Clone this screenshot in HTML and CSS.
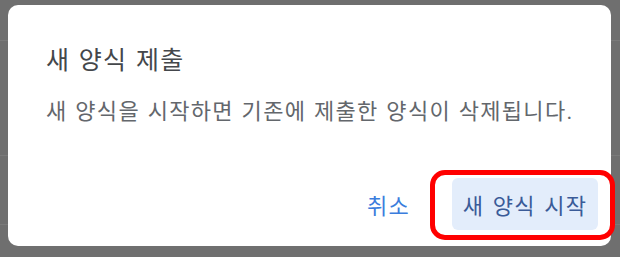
FILE: index.html
```html
<!DOCTYPE html>
<html lang="ko">
<head>
    <meta charset="UTF-8">
    <title>새 양식 제출</title>
    <link rel="stylesheet" href="styles.css">
</head>
<body>
    <div class="page">
        <div class="page__row page__row--first"></div>
        <div class="page__row page__row--second"></div>
        <div class="page__row page__row--third"></div>
    </div>

    <div class="dialog" role="dialog">
        <h2 class="dialog__title">새 양식 제출</h2>
        <p class="dialog__content">새 양식을 시작하면 기존에 제출한 양식이 삭제됩니다.</p>
        <div class="dialog__actions">
            <button class="dialog__btn dialog__btn--text">취소</button>
            <button class="dialog__btn dialog__btn--tonal">새 양식 시작</button>
        </div>
    </div>

    <div class="highlight"></div>
</body>
</html>
```

FILE: styles.css
```css
body{
    margin: 0;
    width: 620px;
    height: 257px;
    overflow: hidden;
    background: #6f6f6f;
    font-family: Roboto, "Noto Sans CJK KR", sans-serif;
}
.page{
    height: 257px;
}
.page__row{
    border-bottom: 1px solid #7a7a7a;
}
.page__row--first{
    height: 40px;
}
.page__row--second{
    height: 114px;
}
.page__row--third{
    height: 68px;
}
.dialog{
    position: absolute;
    left: 8px;
    top: 5px;
    width: 603px;
    height: 241px;
    box-sizing: border-box;
    padding: 38px 13px 16px 38px;
    background: #fff;
    border-radius: 10px;
    display: flex;
    flex-direction: column;
}
.dialog__title{
    margin: 0;
    font-size: 25px;
    font-weight: 400;
    line-height: 36px;
    letter-spacing: 1.3px;
    word-spacing: 1px;
    color: #44474b;
}
.dialog__content{
    margin: 18px 0 0;
    font-size: 22px;
    line-height: 30px;
    letter-spacing: 1.3px;
    word-spacing: 1px;
    color: #63676c;
}
.dialog__actions{
    margin-top: auto;
    display: flex;
    justify-content: flex-end;
    align-items: center;
    gap: 42px;
}
.dialog__btn{
    border: none;
    background: none;
    font-family: inherit;
    font-size: 22px;
    height: 52px;
    padding: 0;
    border-radius: 6px;
    letter-spacing: 1.2px;
    word-spacing: 2px;
}
.dialog__btn--text{
    color: #3b7ddd;
}
.dialog__btn--tonal{
    width: 146px;
    background: #e3edfb;
    color: #3a5b98;
}
.highlight{
    position: absolute;
    left: 430px;
    top: 170px;
    width: 185px;
    height: 70px;
    box-sizing: border-box;
    border: 5px solid #f00;
    border-radius: 15px;
}
```
